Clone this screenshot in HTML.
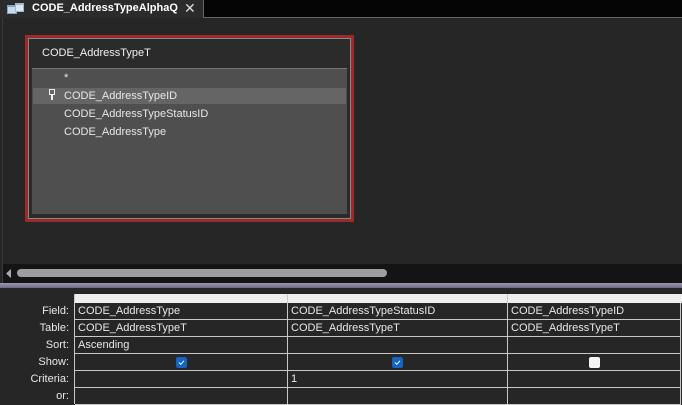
<!DOCTYPE html>
<html><head><style>
*{margin:0;padding:0;box-sizing:border-box}
body{width:682px;height:404px;background:#262626;position:relative;overflow:hidden;font-family:"Liberation Sans",sans-serif;font-size:11px;color:#e8e8e8}
.abs{position:absolute}
.cell{position:absolute;border-right:1px solid #c8c8c8;border-bottom:1px solid #c8c8c8;background:#262626;padding-left:3px;line-height:16px;white-space:nowrap;overflow:hidden}
.lbl{position:absolute;right:613px;line-height:16px;text-align:right;color:#e8e8e8}
.cb{position:absolute;width:11px;height:11px;border-radius:2px}
</style></head><body>
<div class="abs" style="left:0;top:0;width:682px;height:18px;background:#050505"></div>
<div class="abs" style="left:203px;top:0;width:479px;height:18px;border-left:1px solid #666;border-bottom:1px solid #666;background:#050505"></div>
<div class="abs" style="left:0;top:0;width:203px;height:18px;background:#2b2b2b"></div>
<svg class="abs" style="left:7px;top:2px" width="18" height="13"><rect x="0" y="3" width="10" height="9" fill="#7aa6c8"/><rect x="1" y="5" width="8" height="6" fill="#c9d9e8"/><rect x="8" y="1" width="9" height="9" fill="#9bb8d0"/><rect x="9" y="3" width="7" height="6" fill="#dde7f0"/></svg>
<div class="abs" style="left:32px;top:2px;font-weight:bold;color:#fff;font-size:11px">CODE_AddressTypeAlphaQ</div>
<div class="abs" style="left:184px;top:0px;color:#ddd;font-size:14px">✕</div>
<div class="abs" style="left:2px;top:18px;width:1px;height:268px;background:#3a3a3a"></div>
<div class="abs" style="left:25px;top:35px;width:329px;height:187px;border:3px solid #9b2a2a;background:#2b2b2b"></div>
<div class="abs" style="left:28px;top:38px;width:323px;height:181px;border:1px solid #888;background:#2b2b2b"></div>
<div class="abs" style="left:42px;top:47px;color:#f0f0f0;font-size:11px">CODE_AddressTypeT</div>
<div class="abs" style="left:32px;top:68px;width:315px;height:146px;background:#4f4f4f;border-top:1px solid #777"></div>
<div class="abs" style="left:33px;top:88px;width:313px;height:16px;background:#656565"></div>
<div class="abs" style="left:64px;top:72px">*</div>
<svg class="abs" style="left:49px;top:89px" width="6" height="12"><rect x="0.5" y="0.5" width="5" height="5" fill="none" stroke="#eee"/><rect x="2" y="5" width="2" height="6" fill="#eee"/></svg>
<div class="abs" style="left:64px;top:90px">CODE_AddressTypeID</div>
<div class="abs" style="left:64px;top:108px">CODE_AddressTypeStatusID</div>
<div class="abs" style="left:64px;top:126px">CODE_AddressType</div>
<div class="abs" style="left:3px;top:264px;width:679px;height:19px;background:#141414"></div>
<svg class="abs" style="left:6px;top:269px" width="6" height="9"><path d="M5 0 L0 4.5 L5 9Z" fill="#aaa"/></svg>
<div class="abs" style="left:17px;top:269px;width:370px;height:8px;border-radius:4px;background:#9e9e9e"></div>
<div class="abs" style="left:0;top:283px;width:682px;height:5px;background:linear-gradient(#9a97b3,#6e6b88)"></div>
<div class="abs" style="left:0;top:288px;width:682px;height:116px;background:#262626"></div>
<div class="abs" style="left:74px;top:294px;width:608px;height:9px;background:#eeeeee;border-left:1px solid #c8c8c8"></div>
<div class="abs" style="left:287px;top:294px;width:1px;height:9px;background:#c8c8c8"></div>
<div class="abs" style="left:507px;top:294px;width:1px;height:9px;background:#c8c8c8"></div>
<div class="abs" style="left:74px;top:303px;width:608px;height:101px;border-left:1px solid #c8c8c8"></div>

<div class="lbl" style="top:303px">Field:</div>
<div class="lbl" style="top:320px">Table:</div>
<div class="lbl" style="top:337px">Sort:</div>
<div class="lbl" style="top:354px">Show:</div>
<div class="lbl" style="top:371px">Criteria:</div>
<div class="lbl" style="top:388px">or:</div>

<div class="cell" style="left:75px;top:303px;width:213px;height:17px">CODE_AddressType</div>
<div class="cell" style="left:288px;top:303px;width:220px;height:17px">CODE_AddressTypeStatusID</div>
<div class="cell" style="left:508px;top:303px;width:173px;height:17px">CODE_AddressTypeID</div>
<div class="cell" style="left:75px;top:320px;width:213px;height:17px">CODE_AddressTypeT</div>
<div class="cell" style="left:288px;top:320px;width:220px;height:17px">CODE_AddressTypeT</div>
<div class="cell" style="left:508px;top:320px;width:173px;height:17px">CODE_AddressTypeT</div>
<div class="cell" style="left:75px;top:337px;width:213px;height:17px">Ascending</div>
<div class="cell" style="left:288px;top:337px;width:220px;height:17px"></div>
<div class="cell" style="left:508px;top:337px;width:173px;height:17px"></div>
<div class="cell" style="left:75px;top:354px;width:213px;height:17px"></div>
<div class="cell" style="left:288px;top:354px;width:220px;height:17px"></div>
<div class="cell" style="left:508px;top:354px;width:173px;height:17px"></div>
<div class="cell" style="left:75px;top:371px;width:213px;height:17px"></div>
<div class="cell" style="left:288px;top:371px;width:220px;height:17px">1</div>
<div class="cell" style="left:508px;top:371px;width:173px;height:17px"></div>
<div class="cell" style="left:75px;top:388px;width:213px;height:17px"></div>
<div class="cell" style="left:288px;top:388px;width:220px;height:17px"></div>
<div class="cell" style="left:508px;top:388px;width:173px;height:17px"></div>

<svg class="cb" style="left:176px;top:357px" width="11" height="11"><rect width="11" height="11" rx="2" fill="#1565c0"/><path d="M3 5.5 L4.8 7.3 L8 3.8" stroke="#fff" stroke-width="1" fill="none"/></svg>
<svg class="cb" style="left:392px;top:357px" width="11" height="11"><rect width="11" height="11" rx="2" fill="#1565c0"/><path d="M3 5.5 L4.8 7.3 L8 3.8" stroke="#fff" stroke-width="1" fill="none"/></svg>
<div class="cb" style="left:589px;top:357px;background:#f4f4f4"></div>
</body></html>
